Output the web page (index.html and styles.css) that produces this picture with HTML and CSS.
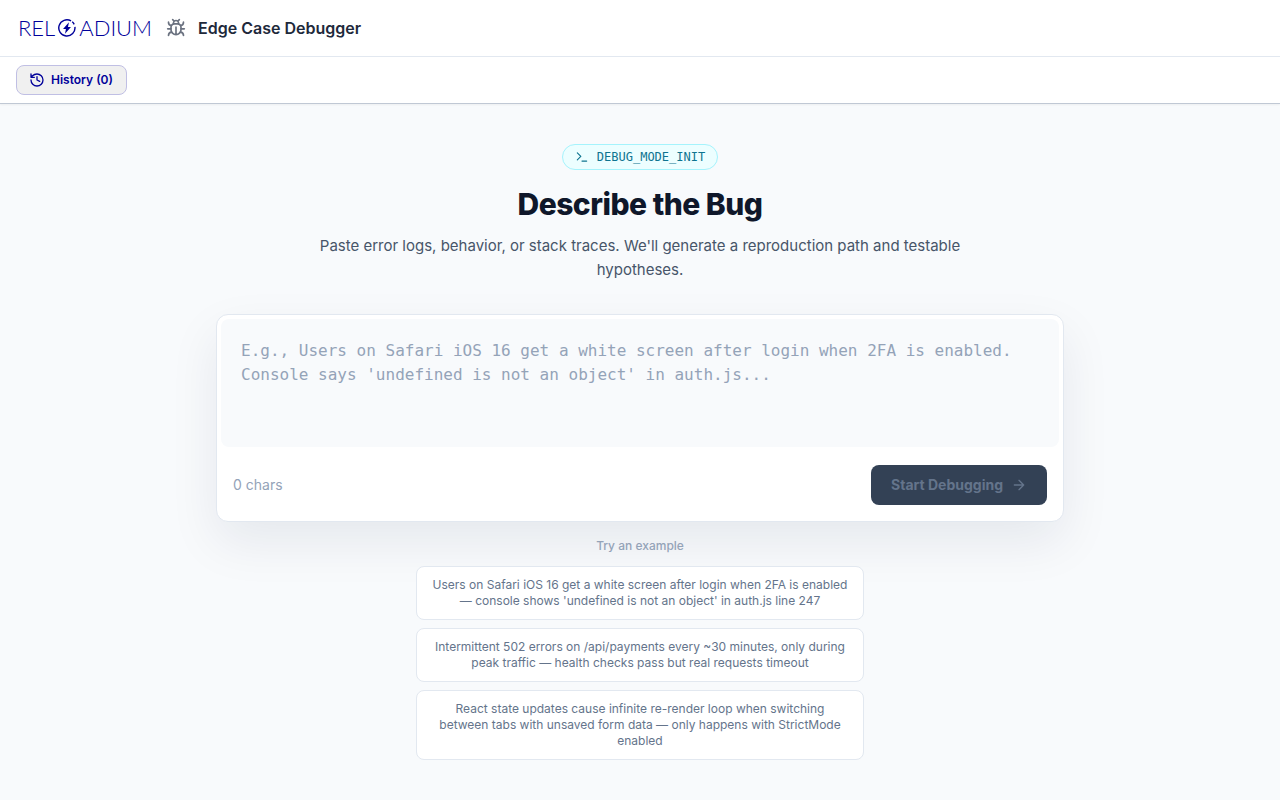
FILE: index.html
```
<!DOCTYPE html>
<html lang="en">

<head>
    <meta charset="utf-8">
    <meta name="viewport" content="width=device-width, initial-scale=1">
    <title>Edge Case Debugger</title>
    <link rel="stylesheet" href="styles.css">
</head>

<body>

    <header class="header">
        <a class="logo" href="#" aria-label="Reloadium">
            <span>REL</span>
            <svg class="logo-mark" viewBox="0 0 20 20" fill="none" stroke="currentColor" stroke-width="1.6">
                <path d="M18.8 8.8A9 9 0 1 1 14.5 2.2M15.8 3.1A9 9 0 0 1 18 5.9" />
                <path d="M12.2 3.5L5.6 11.2h3.2L7.8 16.5L14.4 8.8h-3.3z" fill="currentColor" stroke="none" />
            </svg>
            <span>ADIUM</span>
        </a>
        <svg class="icon bug" viewBox="0 0 24 24">
            <path d="m8 2 1.88 1.88M14.12 3.88 16 2M9 7.13v-1a3.003 3.003 0 1 1 6 0v1" />
            <path d="M12 20c-3.3 0-6-2.7-6-6v-3a4 4 0 0 1 4-4h4a4 4 0 0 1 4 4v3c0 3.3-2.7 6-6 6M12 20v-9" />
            <path d="M6.53 9C4.6 8.8 3 7.1 3 5M6 13H2M3 21c0-2.1 1.7-3.9 3.8-4M20.97 5c0 2.1-1.6 3.8-3.5 4M22 13h-4M17.2 17c2.1.1 3.8 1.9 3.8 4" />
        </svg>
        <span class="app-name">Edge Case Debugger</span>
    </header>

    <nav class="toolbar">
        <button class="history" type="button">
            <svg class="icon" viewBox="0 0 24 24">
                <path d="M3 12a9 9 0 1 0 9-9 9.75 9.75 0 0 0-6.74 2.74L3 8M3 3v5h5M12 7v5l4 2" />
            </svg>
            History (0)
        </button>
    </nav>

    <main class="main">
        <div class="badge">
            <svg class="icon" viewBox="0 0 24 24">
                <path d="m4 17 6-6-6-6M12 19h8" />
            </svg>
            DEBUG_MODE_INIT
        </div>
        <h1 class="title">Describe the Bug</h1>
        <p class="intro">Paste error logs, behavior, or stack traces. We'll generate a reproduction path and testable hypotheses.</p>

        <form class="card">
            <textarea class="bug-input" aria-label="Bug description" placeholder="E.g., Users on Safari iOS 16 get a white screen after login when 2FA is enabled. Console says 'undefined is not an object' in auth.js..."></textarea>
            <div class="card-footer">
                <span class="count">0 chars</span>
                <button class="start" type="submit" disabled>
                    Start Debugging
                    <svg class="icon" viewBox="0 0 24 24">
                        <path d="M5 12h14M12 5l7 7-7 7" />
                    </svg>
                </button>
            </div>
        </form>

        <section class="examples">
            <p class="examples-title">Try an example</p>
            <button class="example" type="button">Users on Safari iOS 16 get a white screen after login when 2FA is enabled — console shows 'undefined is not an object' in auth.js line 247</button>
            <button class="example" type="button">Intermittent 502 errors on /api/payments every ~30 minutes, only during peak traffic — health checks pass but real requests timeout</button>
            <button class="example" type="button">React state updates cause infinite re-render loop when switching between tabs with unsaved form data — only happens with StrictMode enabled</button>
        </section>
    </main>

</body>

</html>
```
FILE: styles.css
```
* {
    box-sizing: border-box;
}

body {
    margin: 0;
    min-height: 100vh;
    background: #f8fafc;
    color: #0f172a;
    font-family: Inter, "Liberation Sans", sans-serif;
    font-size: 16px;
    line-height: 24px;
}

button {
    font-family: inherit;
    cursor: pointer;
}

.icon {
    flex: none;
    width: 14px;
    height: 14px;
    fill: none;
    stroke: currentColor;
    stroke-width: 2;
    stroke-linecap: round;
    stroke-linejoin: round;
}

/* top bar */
.header {
    display: flex;
    align-items: center;
    gap: 12px;
    height: 57px;
    padding: 0 16px;
    background: #fff;
    border-bottom: 1px solid #e2e8f0;
}

.logo {
    display: flex;
    align-items: center;
    gap: 3px;
    padding: 0 2px;
    color: #00009a;
    font-family: Lato, sans-serif;
    font-size: 22px;
    font-weight: 300;
    text-decoration: none;
}

.logo-mark {
    width: 18px;
    height: 18px;
}

.bug {
    width: 20px;
    height: 20px;
    color: #6b7280;
}

.app-name {
    color: #1e293b;
    font-weight: 600;
}

.toolbar {
    padding: 8px 16px;
    background: #fff;
    border-bottom: 1px solid #c0c8d4;
    box-shadow: 0 1px 2px rgba(0, 0, 0, 0.05);
}

.history {
    display: flex;
    align-items: center;
    gap: 6px;
    padding: 6px 13px 6px 12px;
    background: #f0f0f0;
    border: 1px solid #c0bfe4;
    border-radius: 8px;
    color: #00009a;
    font-size: 12px;
    font-weight: 600;
    line-height: 16px;
}

.history .icon {
    width: 16px;
    height: 16px;
}

/* content */
.main {
    display: flex;
    flex-direction: column;
    align-items: center;
    max-width: 896px;
    margin: 0 auto;
    padding: 40px 24px;
}

.badge {
    display: flex;
    align-items: center;
    gap: 8px;
    padding: 4px 12px;
    background: #ecfeff;
    border: 1px solid #a5f3fc;
    border-radius: 999px;
    color: #0e7490;
    font-family: "DejaVu Sans Mono", monospace;
    font-size: 12px;
    line-height: 16px;
}

.title {
    margin: 16px 0 12px;
    font-size: 30px;
    font-weight: 800;
    line-height: 36px;
    letter-spacing: -0.5px;
}

.intro {
    max-width: 672px;
    margin: 0 0 32px;
    color: #475569;
    font-size: 15px;
    text-align: center;
}

.card {
    width: 100%;
    padding: 4px;
    background: #fff;
    border: 1px solid #e2e8f0;
    border-radius: 12px;
    box-shadow: 0 20px 50px rgba(15, 23, 60, 0.08);
}

.bug-input {
    display: block;
    width: 100%;
    height: 128px;
    padding: 20px;
    background: #f8fafc;
    border: 0;
    border-radius: 8px;
    color: #1e293b;
    font-family: "DejaVu Sans Mono", monospace;
    font-size: 16px;
    line-height: 24px;
    resize: none;
}

.bug-input::placeholder {
    color: #94a3b8;
}

.card-footer {
    display: flex;
    align-items: center;
    justify-content: space-between;
    padding: 18px 12px 12px;
}

.count {
    color: #94a3b8;
    font-size: 14px;
}

.start {
    display: flex;
    align-items: center;
    gap: 8px;
    padding: 10px 20px;
    background: #334155;
    border: 0;
    border-radius: 8px;
    color: #64748b;
    font-size: 14px;
    font-weight: 700;
    line-height: 20px;
}

.start .icon {
    width: 16px;
    height: 16px;
}

/* example prompts */
.examples {
    display: flex;
    flex-direction: column;
    gap: 8px;
    width: 100%;
    max-width: 448px;
    margin-top: 16px;
}

.examples-title {
    margin: 0 0 4px;
    color: #94a3b8;
    font-size: 12px;
    font-weight: 500;
    line-height: 16px;
    text-align: center;
}

.example {
    padding: 10px 14px;
    background: #fff;
    border: 1px solid #e2e8f0;
    border-radius: 8px;
    color: #64748b;
    font-size: 12px;
    line-height: 16px;
}
```
